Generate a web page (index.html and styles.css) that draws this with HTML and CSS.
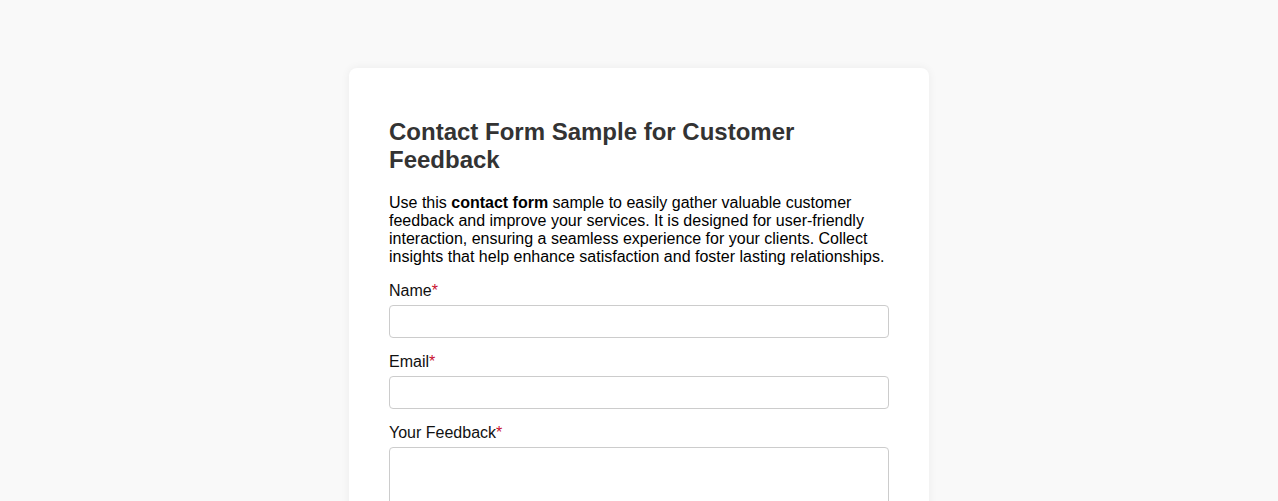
FILE: index.html
```html
<!DOCTYPE html>
<html lang="en">
<head>
<meta charset="utf-8">
<title>Contact Form Sample for Customer Feedback</title>
<link rel="stylesheet" href="styles.css">
</head>
<body>
<div class="card">
  <h1 class="title">Contact Form Sample for Customer Feedback</h1>
  <p class="intro">Use this <strong>contact form</strong> sample to easily gather valuable customer feedback and improve your services. It is designed for user-friendly interaction, ensuring a seamless experience for your clients. Collect insights that help enhance satisfaction and foster lasting relationships.</p>
  <form class="form">
    <div class="field">
      <label class="label" for="name">Name<span class="req">*</span></label>
      <input class="input" id="name" type="text">
    </div>
    <div class="field">
      <label class="label" for="email">Email<span class="req">*</span></label>
      <input class="input" id="email" type="email">
    </div>
    <div class="field">
      <label class="label" for="fb">Your Feedback<span class="req">*</span></label>
      <textarea class="textarea" id="fb"></textarea>
    </div>
  </form>
</div>
</body>
</html>
```
FILE: styles.css
```css
html, body {
  margin: 0;
  padding: 0;
  background: #f9f9f9;
  font-family: "Liberation Sans", Arial, sans-serif;
}
body {
  padding-top: 68px;
}
.card {
  width: 500px;
  margin: 0 auto;
  background: #fff;
  border-radius: 8px;
  padding: 50px 40px 40px;
  box-shadow: 0 0 10px rgba(0,0,0,0.06);
}
.title {
  margin: 0;
  font-size: 24px;
  line-height: 28px;
  font-weight: bold;
  color: #333;
}
.intro {
  margin: 20px 0 16px;
  font-size: 16px;
  line-height: 18px;
  color: #000;
}
.form {
  display: flex;
  flex-direction: column;
  gap: 15px;
}
.field {
  display: flex;
  flex-direction: column;
  gap: 5px;
}
.label {
  font-size: 16px;
  line-height: 18px;
  color: #111;
}
.req {
  color: #c8102e;
}
.input, .textarea {
  box-sizing: border-box;
  width: 500px;
  height: 33px;
  margin: 0;
  border: 1px solid #ccc;
  border-radius: 4px;
  background: #fff;
  font-family: inherit;
  font-size: 16px;
  padding: 6px 8px;
}
.textarea {
  height: 120px;
  resize: vertical;
  display: block;
}
```
